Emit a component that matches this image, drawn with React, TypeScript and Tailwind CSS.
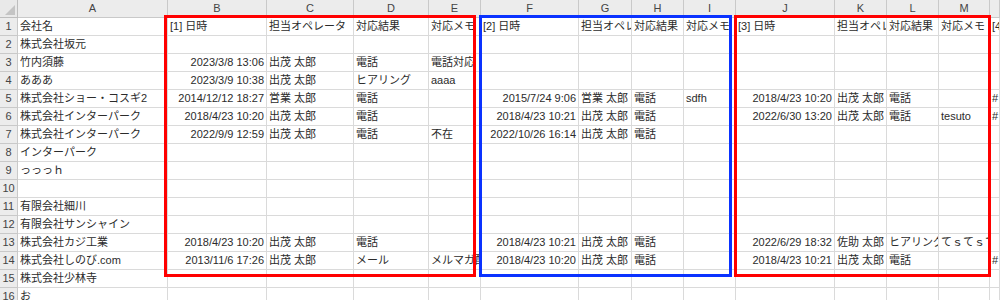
const COL_LETTERS = ['A', 'B', 'C', 'D', 'E', 'F', 'G', 'H', 'I', 'J', 'K', 'L', 'M', ''];

// A..N
const ROWS: string[][] = [
  ['会社名', '[1] 日時', '担当オペレータ', '対応結果', '対応メモ', '[2] 日時', '担当オペレータ', '対応結果', '対応メモ', '[3] 日時', '担当オペレータ', '対応結果', '対応メモ', '[4] 日時'],
  ['株式会社坂元', '', '', '', '', '', '', '', '', '', '', '', '', ''],
  ['竹内須藤', '2023/3/8 13:06', '出茂 太郎', '電話', '電話対応', '', '', '', '', '', '', '', '', ''],
  ['あああ', '2023/3/9 10:38', '出茂 太郎', 'ヒアリング', 'aaaa', '', '', '', '', '', '', '', '', ''],
  ['株式会社ショー・コスギ2', '2014/12/12 18:27', '営業 太郎', '電話', '', '2015/7/24 9:06', '営業 太郎', '電話', 'sdfh', '2018/4/23 10:20', '出茂 太郎', '電話', '', '#'],
  ['株式会社インターパーク', '2018/4/23 10:20', '出茂 太郎', '電話', '', '2018/4/23 10:21', '出茂 太郎', '電話', '', '2022/6/30 13:20', '出茂 太郎', '電話', 'tesuto', '#'],
  ['株式会社インターパーク', '2022/9/9 12:59', '出茂 太郎', '電話', '不在', '2022/10/26 16:14', '出茂 太郎', '電話', '', '', '', '', '', ''],
  ['インターパーク', '', '', '', '', '', '', '', '', '', '', '', '', ''],
  ['っっっｈ', '', '', '', '', '', '', '', '', '', '', '', '', ''],
  ['', '', '', '', '', '', '', '', '', '', '', '', '', ''],
  ['有限会社細川', '', '', '', '', '', '', '', '', '', '', '', '', ''],
  ['有限会社サンシャイン', '', '', '', '', '', '', '', '', '', '', '', '', ''],
  ['株式会社カジ工業', '2018/4/23 10:20', '出茂 太郎', '電話', '', '2018/4/23 10:21', '出茂 太郎', '電話', '', '2022/6/29 18:32', '佐助 太郎', 'ヒアリング', 'てｓてｓて', ''],
  ['株式会社しのび.com', '2013/11/6 17:26', '出茂 太郎', 'メール', 'メルマガ配信', '2018/4/23 10:20', '出茂 太郎', '電話', '', '2018/4/23 10:21', '出茂 太郎', '電話', '', '#'],
  ['株式会社少林寺', '', '', '', '', '', '', '', '', '', '', '', '', ''],
  ['お', '', '', '', '', '', '', '', '', '', '', '', '', ''],
];

const isDate = (s: string) => /^\d{4}\/\d+\/\d+/.test(s);

function Cell({ value }: { value: string }) {
  return (
    <div
      className={`border-r border-b border-[#dadada] overflow-hidden whitespace-nowrap px-[2px] leading-[17px] ${
        isDate(value) ? 'text-right' : 'text-left'
      }`}
    >
      {value}
    </div>
  );
}

export default function App() {
  return (
    <div
      className="relative w-[1000px] h-[300px] overflow-hidden bg-white text-[11px] text-[#2b2b2b]"
      style={{ fontFamily: '"Liberation Sans", "Noto Sans CJK JP", sans-serif' }}
    >
      <div className="grid grid-cols-[18px_150px_99px_87px_75px_52px_98px_53px_52px_52px_99px_52px_52px_51px_1fr] auto-rows-[18px]">
        {/* corner */}
        <div className="relative bg-[#e9e9e9] border-r border-b border-[#bdbdbd]">
          <svg className="absolute right-[2px] bottom-[2px]" width="10" height="10" viewBox="0 0 10 10">
            <polygon points="10,0 10,10 0,10" fill="#c4c4c4" />
          </svg>
        </div>
        {COL_LETTERS.map((c, i) => (
          <div
            key={`h${i}`}
            className="bg-[#ececec] border-r border-b border-[#c9c9c9] text-center leading-[17px] text-[#444]"
          >
            {c}
          </div>
        ))}
        {ROWS.map((row, r) => (
          <>
            <div
              key={`n${r}`}
              className="bg-[#ececec] border-r border-b border-[#c9c9c9] text-center leading-[17px] text-[#444]"
            >
              {r + 1}
            </div>
            {row.map((v, c) => (
              <Cell key={`c${r}-${c}`} value={v} />
            ))}
          </>
        ))}
      </div>

      {/* highlight boxes */}
      <div className="absolute left-[164px] top-[15px] w-[312px] h-[262px] border-[3px] border-[#ff0000]" />
      <div className="absolute left-[479px] top-[15px] w-[253px] h-[262px] border-[3px] border-[#0a32ff]" />
      <div className="absolute left-[734px] top-[15px] w-[257px] h-[262px] border-[3px] border-[#ff0000]" />
    </div>
  );
}
